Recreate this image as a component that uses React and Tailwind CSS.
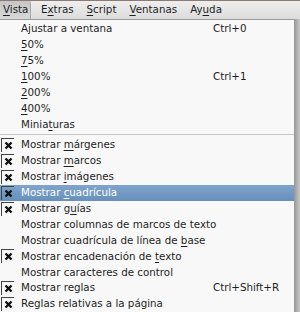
import React from 'react';

const U = ({ children }) => <span className="underline underline-offset-2">{children}</span>;

const items = [
  { label: <>Ajustar a ventana</>, key: 'Ctrl+0' },
  { label: <><U>5</U>0%</> },
  { label: <><U>7</U>5%</> },
  { label: <><U>1</U>00%</>, key: 'Ctrl+1' },
  { label: <><U>2</U>00%</> },
  { label: <><U>4</U>00%</> },
  { label: <>Minia<U>t</U>uras</> },
  { sep: true },
  { label: <>Mostrar <U>m</U>árgenes</>, check: true },
  { label: <>Mostrar <U>m</U>arcos</>, check: true },
  { label: <>Mostrar <U>i</U>mágenes</>, check: true },
  { label: <>Mostrar <U>c</U>uadrícula</>, check: true, active: true },
  { label: <>Mostrar g<U>u</U>ías</>, check: true },
  { label: <>Mostrar columnas de marcos de texto</> },
  { label: <>Mostrar cuadrícula de línea de <U>b</U>ase</> },
  { label: <>Mostrar encadenación de <U>t</U>exto</>, check: true },
  { label: <>Mostrar caracteres de control</> },
  { label: <>Mostrar reglas</>, check: true, key: 'Ctrl+Shift+R' },
  { label: <>Reglas relativas a la página</>, check: true },
];

function Check() {
  return (
    <div className="w-[13px] h-[14px] border-l border-t border-[#444] flex items-center justify-center">
      <svg width="9" height="9" viewBox="0 0 9 9">
        <path d="M1.5 1.5 L7.5 7.5 M7.5 1.5 L1.5 7.5" stroke="#111" strokeWidth="2.4" />
      </svg>
    </div>
  );
}

export default function App() {
  return (
    <div className="w-[300px] h-[312px] overflow-hidden bg-[#b8b8b8] text-[10.3px] text-[#1e1e1e] flex flex-col" style={{ fontFamily: '"DejaVu Sans", sans-serif' }}>
      {/* Menubar */}
      <div className="h-[19px] border-t border-[#8b7b70] bg-gradient-to-b from-[#eeeeee] to-[#dcdcdc] flex items-end shrink-0">
        <div className="h-[18px] w-[31px] pl-[3px] mr-[10px] flex items-center bg-gradient-to-b from-[#c6c6c6] to-[#d8d8d8] border-r border-[#a8a8a8] rounded-tr-[2px]">
          <span><U>V</U>ista</span>
        </div>
        <div className="h-[18px] flex items-center gap-[13px]">
          <span>E<U>x</U>tras</span>
          <span><U>S</U>cript</span>
          <span><U>V</U>entanas</span>
          <span>Ay<U>u</U>da</span>
        </div>
      </div>

      <div className="flex flex-1 min-h-0">
        {/* Menu */}
        <div className="w-[295px] bg-[#f8f8f8] border-t border-r border-[#9a9a9a] pt-[1px] flex flex-col shrink-0">
          {items.map((it, i) =>
            it.sep ? (
              <div key={i} className="h-[5px] flex items-center">
                <div className="h-px w-full bg-[#c8c8c8]" />
              </div>
            ) : (
              <div
                key={i}
                className={`h-[16px] flex items-center ${it.active ? 'bg-gradient-to-b from-[#7fa4cc] to-[#6690bb] text-white' : ''}`}
              >
                <div className="w-[21px] pl-[1px] flex items-center shrink-0">
                  {it.check && <Check />}
                </div>
                <div className="flex-1 whitespace-nowrap">{it.label}</div>
                <div className="w-[81px] whitespace-nowrap shrink-0">{it.key}</div>
              </div>
            )
          )}
        </div>
        <div className="flex-1 bg-gradient-to-r from-[#a0a0a0] to-[#c8c8c8]" />
      </div>
    </div>
  );
}
